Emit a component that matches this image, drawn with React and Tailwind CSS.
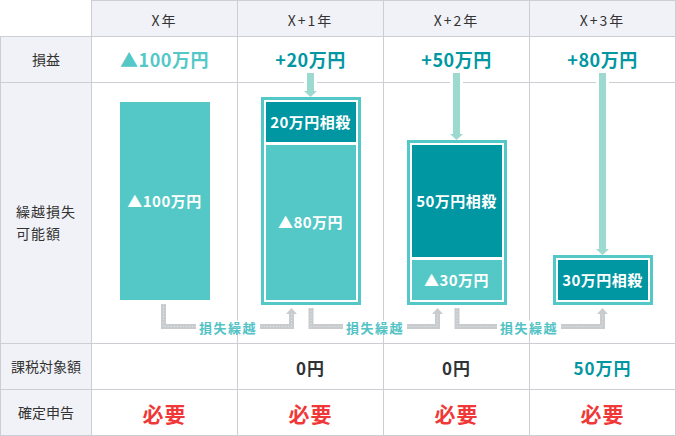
import React from 'react';

const LINE = 'border-[#cdced3]';
const HEAD_BG = 'bg-[#f1f2f7]';
const YEARS = ['X年', 'X+1年', 'X+2年', 'X+3年'];

const PROFITS = [
  { text: '▲100万円', color: 'text-[#53c8c6]' },
  { text: '+20万円', color: 'text-[#0097a3]' },
  { text: '+50万円', color: 'text-[#0097a3]' },
  { text: '+80万円', color: 'text-[#0097a3]' },
];

const TAXABLE = [
  { text: '', color: '' },
  { text: '0円', color: 'text-[#2f3336]' },
  { text: '0円', color: 'text-[#2f3336]' },
  { text: '50万円', color: 'text-[#0097a3]' },
];

function LabelCell({ children }) {
  return (
    <div className={`flex items-center justify-center border-l border-r border-b ${LINE} ${HEAD_BG} text-[14px] text-[#333]`}>
      {children}
    </div>
  );
}

function DownArrow() {
  return (
    <div className="relative z-10 -mt-[10px] flex w-[13px] flex-1 flex-col items-center bg-white">
      <div className="w-[7px] flex-1 bg-[#9cd9cf]" />
      <svg width="13" height="6" viewBox="0 0 13 6" className="block">
        <polygon points="0,0 13,0 6.5,6" fill="#9cd9cf" />
      </svg>
    </div>
  );
}

function Frame({ dark, darkH, light, lightH }) {
  return (
    <div className="flex w-[100px] flex-col gap-[3px] border-[3px] border-[#53c8c6] p-[2px]">
      <div className={`flex items-center justify-center bg-[#0097a3] text-[15px] font-bold tracking-[0.5px] text-white ${darkH}`}>{dark}</div>
      {light && (
        <div className={`flex items-center justify-center bg-[#53c8c6] text-[15px] font-bold tracking-[0.5px] text-white ${lightH}`}>{light}</div>
      )}
    </div>
  );
}

function Connectors() {
  const paths = [
    'M71.5 221 V243.5 H199.5 V231',
    'M219 225 V243.5 H345.5 V231',
    'M365 225 V243.5 H510.5 V231',
  ];
  const heads = ['194,231 205,231 199.5,225', '340,231 351,231 345.5,225', '505,231 516,231 510.5,225'];
  return (
    <div className="pointer-events-none absolute left-0 top-0 h-[260px] w-[584px]">
      <svg width="584" height="260" className="absolute left-0 top-0">
        {paths.map(d => (
          <g key={d}>
            <path d={d} fill="none" stroke="#c9ccce" strokeWidth="5" strokeLinejoin="miter" />
            <path d={d} fill="none" stroke="#ffffff" strokeOpacity="0.45" strokeWidth="1" strokeDasharray="1 2" />
          </g>
        ))}
        {heads.map(p => (
          <polygon key={p} points={p} fill="#c9ccce" />
        ))}
      </svg>
      <span className="absolute left-[136px] top-[244px] -translate-x-1/2 -translate-y-1/2 bg-white px-[3px] text-[13px] font-bold leading-none tracking-[1.5px] text-[#53c3c5]">損失繰越</span>
      <span className="absolute left-[283px] top-[244px] -translate-x-1/2 -translate-y-1/2 bg-white px-[3px] text-[13px] font-bold leading-none tracking-[1.5px] text-[#53c3c5]">損失繰越</span>
      <span className="absolute left-[437px] top-[244px] -translate-x-1/2 -translate-y-1/2 bg-white px-[3px] text-[13px] font-bold leading-none tracking-[1.5px] text-[#53c3c5]">損失繰越</span>
    </div>
  );
}

export default function App() {
  return (
    <div className="h-[436px] w-[676px] bg-white font-['Noto_Sans_CJK_JP','Noto_Sans',sans-serif]">
      <div className="grid grid-cols-[92px_repeat(4,146px)] grid-rows-[37px_46px_261px_46px_46px]">
        {/* header */}
        <div className={`border-r border-b ${LINE}`} />
        {YEARS.map(y => (
          <div key={y} className={`flex items-center justify-center border-t border-r border-b ${LINE} ${HEAD_BG} pt-[3px] text-[14px] tracking-[2px] text-[#333]`}>
            {y}
          </div>
        ))}

        {/* 損益 */}
        <LabelCell>損益</LabelCell>
        {PROFITS.map((p, i) => (
          <div key={i} className={`flex items-center justify-center border-r border-b ${LINE} text-[18px] font-bold tracking-[0.5px] ${p.color}`}>
            {p.text}
          </div>
        ))}

        {/* 繰越損失可能額 */}
        <LabelCell>
          <div className="pt-[18px] text-left leading-[22px] tracking-[1px]">繰越損失<br />可能額</div>
        </LabelCell>
        <div className={`relative flex flex-col items-center border-r border-b ${LINE} pt-[19px]`}>
          <div className="flex h-[198px] w-[90px] items-center justify-center bg-[#53c8c6] text-[15px] font-bold tracking-[0.5px] text-white">▲100万円</div>
          <Connectors />
        </div>
        <div className={`flex flex-col items-center justify-end border-r border-b ${LINE} pb-[38px]`}>
          <DownArrow />
          <Frame dark="20万円相殺" darkH="h-[40px]" light="▲80万円" lightH="h-[155px]" />
        </div>
        <div className={`flex flex-col items-center justify-end border-r border-b ${LINE} pb-[38px]`}>
          <DownArrow />
          <Frame dark="50万円相殺" darkH="h-[112px]" light="▲30万円" lightH="h-[40px]" />
        </div>
        <div className={`flex flex-col items-center justify-end border-r border-b ${LINE} pb-[38px]`}>
          <DownArrow />
          <Frame dark="30万円相殺" darkH="h-[40px]" />
        </div>

        {/* 課税対象額 */}
        <LabelCell>課税対象額</LabelCell>
        {TAXABLE.map((t, i) => (
          <div key={i} className={`flex items-center justify-center border-r border-b ${LINE} pt-[3px] text-[17px] font-bold tracking-[1px] ${t.color}`}>
            {t.text}
          </div>
        ))}

        {/* 確定申告 */}
        <LabelCell>確定申告</LabelCell>
        {YEARS.map(y => (
          <div key={y} className={`flex items-center justify-center border-r border-b ${LINE} pt-[2px] text-[21px] font-bold tracking-[1px] text-[#f03838]`}>
            必要
          </div>
        ))}
      </div>
    </div>
  );
}
